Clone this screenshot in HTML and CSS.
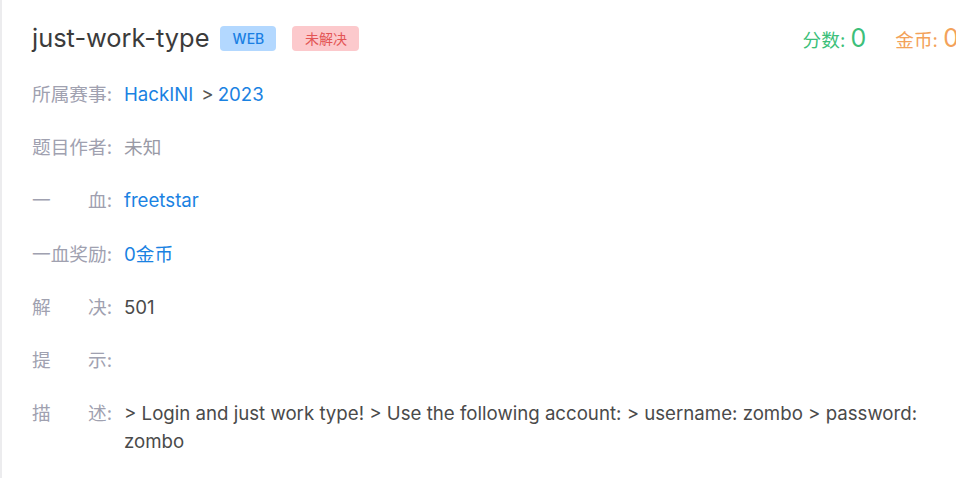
FILE: index.html
```html
<!DOCTYPE html>
<html lang="zh">
<head>
<meta charset="utf-8">
<title>just-work-type</title>
<link rel="stylesheet" href="styles.css">
</head>
<body>
<div class="page">
  <div class="header">
    <h1 class="title">just-work-type</h1>
    <span class="tag tag-web">WEB</span>
    <span class="tag tag-status">未解决</span>
    <div class="stats">
      <span class="stat stat-score">分数: <b>0</b></span>
      <span class="stat stat-coin">金币: <b>0</b></span>
    </div>
  </div>
  <div class="rows">
    <div class="row"><span class="label">所属赛事:</span><span class="value link">HackINI<span class="sep">&gt;</span>2023</span></div>
    <div class="row"><span class="label">题目作者:</span><span class="value muted">未知</span></div>
    <div class="row"><span class="label">一　　血:</span><span class="value link">freetstar</span></div>
    <div class="row"><span class="label">一血奖励:</span><span class="value link">0金币</span></div>
    <div class="row"><span class="label">解　　决:</span><span class="value">501</span></div>
    <div class="row"><span class="label">提　　示:</span><span class="value"></span></div>
    <div class="row"><span class="label">描　　述:</span><span class="value">&gt; Login and just work type! &gt; Use the following account: &gt; username: zombo &gt; password: zombo</span></div>
  </div>
</div>
</body>
</html>
```
FILE: styles.css
```css
html, body {
  margin: 0;
  padding: 0;
  background: #fff;
  overflow: hidden;
}
body {
  font-family: Inter, "Noto Sans CJK SC", sans-serif;
  border-left: 2px solid #ececee;
  height: 478px;
  box-sizing: border-box;
}
.page {
  padding: 20px 0 0 30px;
}
.header {
  display: flex;
  align-items: center;
  height: 36px;
  margin-right: -3px;
}
.title {
  margin: 0;
  font-size: 25.4px;
  font-weight: 400;
  color: #3b3b3b;
  line-height: 36px;
}
.tag {
  display: inline-flex;
  align-items: center;
  justify-content: center;
  height: 25px;
  padding: 0 10px;
  border-radius: 4px;
  font-size: 14px;
  box-sizing: border-box;
}
.tag-web {
  margin-left: 11px;
  background: #b3d8ff;
  color: #1a7fe3;
  width: 56px;
  font-weight: 500;
}
.tag-status {
  margin-left: 16px;
  background: #fcc9cc;
  color: #e35555;
  width: 67px;
}
.stats {
  margin-left: auto;
  display: flex;
  align-items: baseline;
  gap: 29px;
  font-size: 18.67px;
}
.stat b {
  font-weight: 400;
  font-size: 25px;
}
.stat-score { color: #3cbf7a; }
.stat-coin { color: #f3a25a; }
.rows {
  margin-top: 25px;
  padding-right: 30px;
}
.row {
  display: flex;
  line-height: 28px;
  margin-bottom: 25.2px;
  font-size: 18.67px;
}
.label {
  flex: none;
  margin-right: 12px;
  color: #a0a1b0;
  white-space: nowrap;
}
.value {
  color: #4a4a4a;
}
.link { color: #1a82e2; }
.muted { color: #999aa6; }
.sep { color: #555; margin: 0 4px 0 8px; }
```
